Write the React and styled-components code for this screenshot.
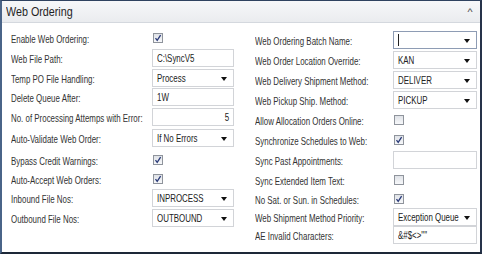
import React from 'react';
import styled, { createGlobalStyle } from 'styled-components';

const GlobalStyle = createGlobalStyle`
  html, body {
    margin: 0;
    padding: 0;
    background: #ffffff;
  }
  body {
    font-family: 'Liberation Sans', Arial, sans-serif;
  }
`;

const Panel = styled.section`
  box-sizing: border-box;
  width: 482px;
  height: 254px;
  background: #ffffff;
  border: 1px solid #2f4260;
  border-left: 2px solid #4a6488;
  border-bottom: 2px solid #1d2838;
  border-right: 2px solid #26334a;
  overflow: hidden;
`;

const Header = styled.header`
  display: flex;
  align-items: center;
  justify-content: space-between;
  height: 21px;
  padding: 0 8px 0 4px;
  background: linear-gradient(#f6f7f9, #eaecef);
  border-bottom: 1px solid #d4d8de;
`;

const Title = styled.h1`
  display: inline-block;
  margin: 0;
  font-size: 12.5px;
  font-weight: 400;
  color: #1f1f1f;
  transform: scaleX(0.86);
  transform-origin: left center;
`;

const Collapse = styled.span`
  font-size: 9px;
  color: #444;
  transform: scaleX(1.2);
`;

const Body = styled.div`
  display: grid;
  grid-template-columns: 240px 1fr;
`;

const Column = styled.div`
  display: flex;
  flex-direction: column;
  padding-top: ${(p) => p.top}px;
  padding-left: ${(p) => p.left}px;
`;

const Row = styled.div`
  display: flex;
  align-items: center;
  height: ${(p) => p.h}px;
`;

const Label = styled.span`
  width: ${(p) => p.w}px;
  flex-shrink: 0;
  white-space: nowrap;
`;

/* the source screenshot is squeezed sideways, so text is narrowed to match */
const Narrow = styled.span`
  display: inline-block;
  font-size: 11px;
  color: ${(p) => p.color || '#333'};
  white-space: nowrap;
  transform: scaleX(0.72);
  transform-origin: ${(p) => (p.right ? 'right' : 'left')} center;
`;

const Field = styled.div`
  box-sizing: border-box;
  position: relative;
  display: flex;
  align-items: center;
  justify-content: ${(p) => (p.right ? 'flex-end' : 'flex-start')};
  width: ${(p) => p.w}px;
  height: 18px;
  flex-shrink: 0;
  padding: 0 4px;
  background: #fff;
  border: 1px solid ${(p) => (p.focus ? '#8e9cb4' : '#d2d4d8')};
  overflow: hidden;
`;

const Caret = styled.span`
  position: absolute;
  right: 6px;
  top: 7px;
  width: 0;
  height: 0;
  border-left: 3px solid transparent;
  border-right: 3px solid transparent;
  border-top: 4px solid #111;
`;

const Cursor = styled.span`
  width: 1px;
  height: 12px;
  background: #222;
`;

const Box = styled.span`
  box-sizing: border-box;
  display: flex;
  align-items: center;
  justify-content: center;
  width: 10px;
  height: 10px;
  margin-left: 1px;
  border: 1px solid #8f949c;
  background: linear-gradient(#dfe2e7, #f7f8fa);
`;

const Check = () => (
  <svg width="8" height="8" viewBox="0 0 8 8">
    <path d="M1.5 4.2 L3.2 6.4 L6.6 1.2" fill="none" stroke="#2a3a78" strokeWidth="1.3" />
  </svg>
);

const CheckBox = ({ checked }) => <Box>{checked && <Check />}</Box>;

const Text = ({ w, value, right }) => (
  <Field w={w} right={right}>
    {value && (
      <Narrow right={right} color="#222">
        {value}
      </Narrow>
    )}
  </Field>
);

const Select = ({ w, value, focus }) => (
  <Field w={w} focus={focus}>
    {focus && <Cursor />}
    {value && <Narrow color="#222">{value}</Narrow>}
    <Caret />
  </Field>
);

const left = [
  { h: 20, label: 'Enable Web Ordering:', check: true },
  { h: 20, label: 'Web File Path:', text: 'C:\\SyncV5' },
  { h: 19, label: 'Temp PO File Handling:', select: 'Process' },
  { h: 20, label: 'Delete Queue After:', text: '1W' },
  { h: 20, label: 'No. of Processing Attemps with Error:', text: '5', right: true },
  { h: 22, label: 'Auto-Validate Web Order:', select: 'If No Errors' },
  { h: 21, label: 'Bypass Credit Warnings:', check: true },
  { h: 18, label: 'Auto-Accept Web Orders:', check: true },
  { h: 20, label: 'Inbound File Nos:', select: 'INPROCESS' },
  { h: 19, label: 'Outbound File Nos:', select: 'OUTBOUND' },
];

const right = [
  { h: 20, label: 'Web Ordering Batch Name:', select: '', focus: true },
  { h: 20, label: 'Web Order Location Override:', select: 'KAN' },
  { h: 20, label: 'Web Delivery Shipment Method:', select: 'DELIVER' },
  { h: 20, label: 'Web Pickup Ship. Method:', select: 'PICKUP' },
  { h: 19, label: 'Allow Allocation Orders Online:', check: false },
  { h: 21, label: 'Synchronize Schedules to Web:', check: true },
  { h: 20, label: 'Sync Past Appointments:', text: '' },
  { h: 19, label: 'Sync Extended Item Text:', check: false },
  { h: 19, label: 'No Sat. or Sun. in Schedules:', check: true },
  { h: 17, label: 'Web Shipment Method Priority:', select: 'Exception Queue' },
  { h: 20, label: 'AE Invalid Characters:', text: '&#$<>""' },
];

const renderControl = (f, w) => {
  if (f.check !== undefined) return <CheckBox checked={f.check} />;
  if (f.select !== undefined) return <Select w={w} value={f.select} focus={f.focus} />;
  return <Text w={w} value={f.text} right={f.right} />;
};

const FieldColumn = ({ fields, top, left: pad, labelW, fieldW }) => (
  <Column top={top} left={pad}>
    {fields.map((f) => (
      <Row key={f.label} h={f.h}>
        <Label w={labelW}>
          <Narrow>{f.label}</Narrow>
        </Label>
        {renderControl(f, fieldW)}
      </Row>
    ))}
  </Column>
);

export default function App() {
  return (
    <>
      <GlobalStyle />
      <Panel>
        <Header>
          <Title>Web Ordering</Title>
          <Collapse>^</Collapse>
        </Header>
        <Body>
          <FieldColumn fields={left} top={5} left={9} labelW={141} fieldW={82} />
          <FieldColumn fields={right} top={7} left={13} labelW={138} fieldW={84} />
        </Body>
      </Panel>
    </>
  );
}
